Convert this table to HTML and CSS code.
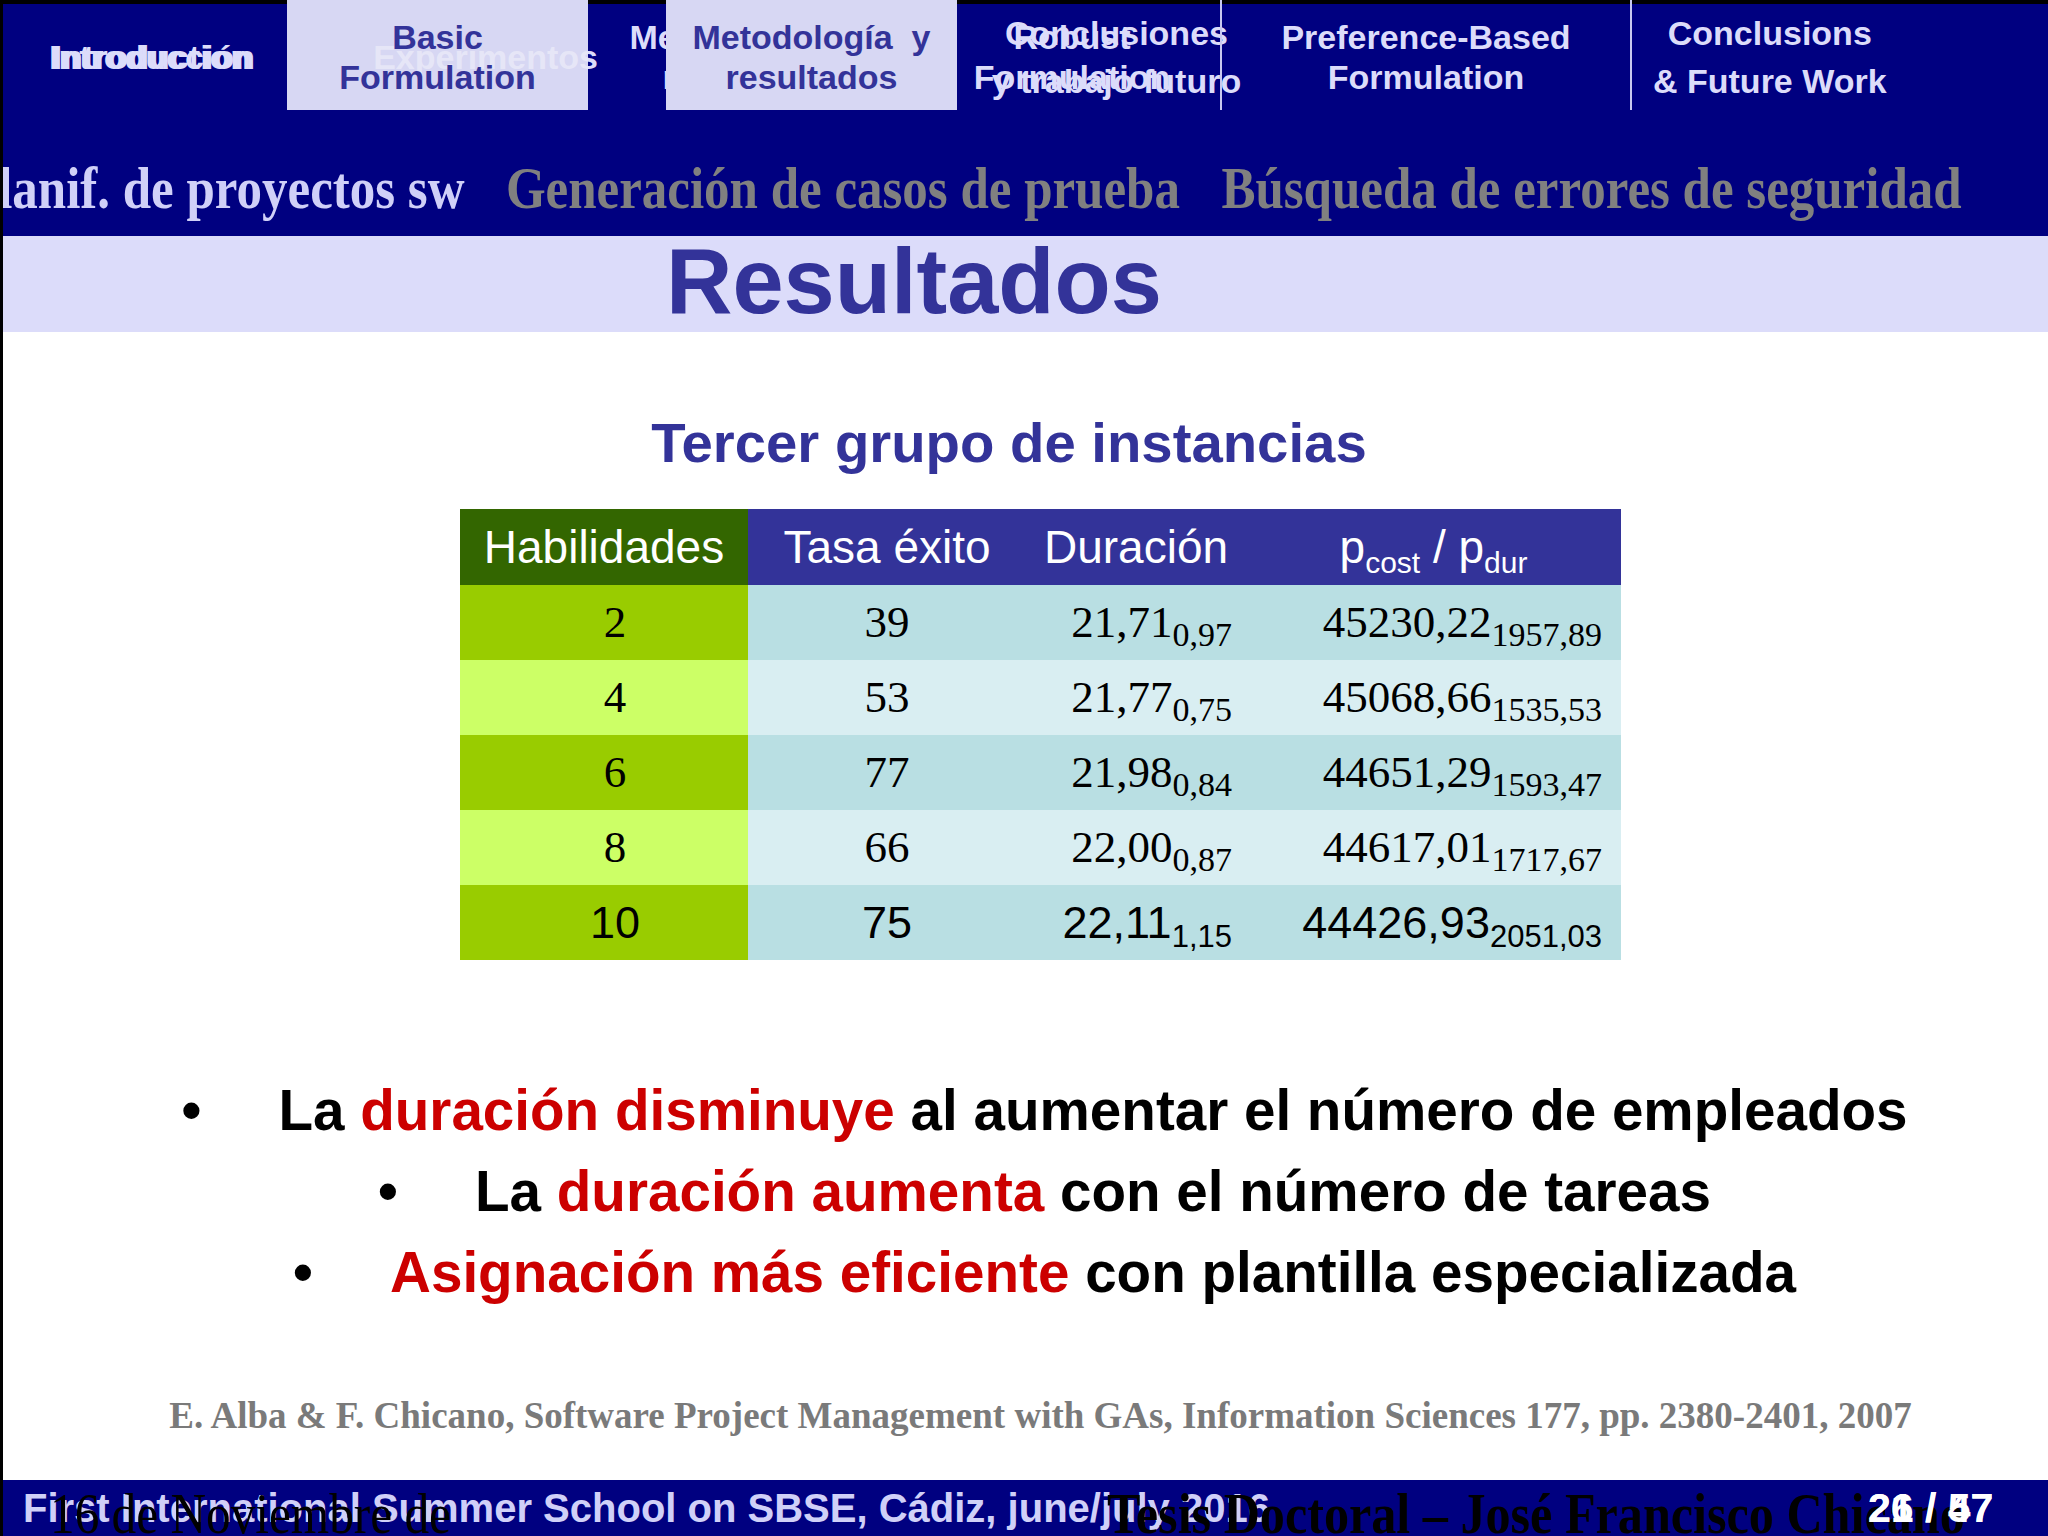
FILE: index.html
```html
<!DOCTYPE html>
<html lang="es">
<head>
<meta charset="utf-8">
<title>Resultados</title>
<link rel="stylesheet" href="styles.css">
</head>
<body>
<div class="slide">
  <header class="topbar">
    <nav class="tabs">
      <div class="tab tab-intro">
        <span class="lbl">Introducción</span>
        <span class="ghost ghost-intro">Introduction</span>
      </div>
      <div class="tab tab-basic">
        <span class="ghost ghost-exp">Experimentos</span>
        <div class="box">
          <span class="ghost ghost-exp faint">Experimentos</span>
          <span class="lbl">Basic<br>Formulation</span>
        </div>
      </div>
      <div class="tab tab-gap"></div>
      <div class="tab tab-met">
        <span class="ghost ghost-met">Metodología&nbsp; y<br>resultados</span>
        <div class="box"><span class="lbl">Metodología&nbsp; y<br>resultados</span></div>
      </div>
      <div class="tab tab-robust">
        <span class="lbl">Robust<br>Formulation</span>
        <span class="ghost ghost-conc">Conclusiones<br>y trabajo futuro</span>
      </div>
      <div class="tab tab-pref">
        <span class="lbl">Preference-Based<br>Formulation</span>
      </div>
      <div class="tab tab-concl">
        <span class="lbl">Conclusions<br>&amp; Future Work</span>
      </div>
    </nav>
    <div class="subnav">
      <span class="current">Planif. de proyectos sw</span>
      <span>Generación de casos de prueba</span>
      <span>Búsqueda de errores de seguridad</span>
    </div>
  </header>

  <div class="titlebar"><h1>Resultados</h1></div>

  <main class="content">
    <h2 class="heading">Tercer grupo de instancias</h2>

    <table class="grid">
      <colgroup><col class="c1"><col class="c2"><col class="c3"><col class="c4"></colgroup>
      <thead>
        <tr>
          <th class="h-green">Habilidades</th>
          <th>Tasa éxito</th>
          <th>Duración</th>
          <th>p<span class="hsub">cost</span> / p<span class="hsub">dur</span></th>
        </tr>
      </thead>
      <tbody>
        <tr><td class="k">2</td><td>39</td><td class="n">21,71<span class="sub">0,97</span></td><td class="n n4">45230,22<span class="sub">1957,89</span></td></tr>
        <tr class="alt"><td class="k">4</td><td>53</td><td class="n">21,77<span class="sub">0,75</span></td><td class="n n4">45068,66<span class="sub">1535,53</span></td></tr>
        <tr><td class="k">6</td><td>77</td><td class="n">21,98<span class="sub">0,84</span></td><td class="n n4">44651,29<span class="sub">1593,47</span></td></tr>
        <tr class="alt"><td class="k">8</td><td>66</td><td class="n">22,00<span class="sub">0,87</span></td><td class="n n4">44617,01<span class="sub">1717,67</span></td></tr>
        <tr class="sans"><td class="k">10</td><td>75</td><td class="n">22,11<span class="sub">1,15</span></td><td class="n n4">44426,93<span class="sub">2051,03</span></td></tr>
      </tbody>
    </table>

    <ul class="points">
      <li><span class="dot">•</span><span>La <em>duración disminuye</em> al aumentar el número de empleados</span></li>
      <li><span class="dot">•</span><span>La <em>duración aumenta</em> con el número de tareas</span></li>
      <li><span class="dot">•</span><span><em>Asignación más eficiente</em> con plantilla especializada</span></li>
    </ul>

    <p class="cite">E. Alba &amp; F. Chicano, Software Project Management with GAs, Information Sciences 177, pp. 2380-2401, 2007</p>
  </main>

  <footer class="footer">
    <span class="event">First International Summer School on SBSE, Cádiz, june/july 2016</span>
    <span class="fghost f-date">16 de Noviembre de</span>
    <span class="fghost f-thesis">Tesis Doctoral – José Francisco Chicano</span>
    <span class="pnum">21 / 57</span>
    <span class="pnum">26 / 47</span>
  </footer>
</div>
</body>
</html>
```

FILE: styles.css
```css
* { box-sizing: border-box; margin: 0; padding: 0; }
html, body { width: 2048px; height: 1536px; overflow: hidden; background: #fff; }
body { font-family: "Liberation Sans", Arial, sans-serif; }

.slide {
  width: 2048px;
  height: 1536px;
  display: flex;
  flex-direction: column;
  border-left: 3px solid #000;
  overflow: hidden;
}

/* ---------- top navigation ---------- */
.topbar {
  flex: none;
  height: 236px;
  background: linear-gradient(#000 0 4px, #000080 4px);
}
.tabs {
  display: grid;
  grid-template-columns: 284px 301px 78px 291px 263px 410px 418px;
  height: 110px;
}
.tab {
  position: relative;
  display: flex;
  align-items: center;
  justify-content: center;
  text-align: center;
  font-weight: 700;
  font-size: 34px;
  line-height: 40px;
  color: #dcdcfa;
  white-space: nowrap;
}
.lbl { position: relative; padding-top: 3px; }
.tab-intro { padding-left: 14px; }
.ghost {
  position: absolute;
  top: 0;
  bottom: 0;
  padding-top: 3px;
  display: flex;
  align-items: center;
  justify-content: center;
}
.ghost-intro { left: 14px; right: 0; }
.box {
  position: relative;
  z-index: 1;
  width: 100%;
  height: 100%;
  display: flex;
  align-items: center;
  justify-content: center;
  overflow: hidden;
  background: #d7d7f3;
  color: #333399;
}
.ghost-exp { right: -10px; justify-content: flex-end; z-index: 0; }
.box .faint { color: rgba(255, 255, 255, 0.4); }
.ghost-met { left: -63px; right: 63px; z-index: 0; }
.tab-robust { padding-right: 33px; }
.ghost-conc { left: 28px; right: -28px; line-height: 48px; }
.tab-pref { border-left: 2px solid #c8c8f0; }
.tab-concl {
  border-left: 2px solid #c8c8f0;
  justify-content: flex-start;
  padding-left: 21px;
  line-height: 48px;
}

.subnav {
  display: flex;
  gap: 48px;
  height: 126px;
  padding-top: 49px;
  margin-left: -36px;
  white-space: nowrap;
  font-family: "Liberation Serif", "Times New Roman", serif;
  font-weight: 700;
  font-size: 59px;
  line-height: 59px;
  color: #808080;
  transform: scaleX(0.864);
  transform-origin: 0 0;
}
.subnav .current { color: #d0d0f8; }

/* ---------- title ---------- */
.titlebar {
  flex: none;
  height: 96px;
  background: #dcdcfa;
}
.titlebar h1 {
  margin-left: 663px;
  font-size: 92px;
  line-height: 90px;
  font-weight: 700;
  color: #333399;
}

/* ---------- content ---------- */
.content {
  flex: 1;
  display: flex;
  flex-direction: column;
  align-items: flex-start;
}
.heading {
  align-self: center;
  margin-top: 79px;
  padding-right: 33px;
  font-size: 56.3px;
  line-height: 64px;
  font-weight: 700;
  color: #333399;
}

.grid {
  margin-top: 34px;
  margin-left: 457px;
  width: 1161px;
  table-layout: fixed;
  border-collapse: collapse;
  border-spacing: 0;
}
.c1 { width: 288px; }
.c2 { width: 278px; }
.c3 { width: 220px; }
.c4 { width: 375px; }
.grid th {
  height: 76px;
  padding: 0;
  background: #333399;
  color: #fff;
  font-weight: 400;
  font-size: 46px;
  line-height: 46px;
  text-align: center;
  white-space: nowrap;
}
.grid th.h-green { background: #336600; }
.hsub { font-size: 30px; line-height: 0; vertical-align: -10px; }
.grid td {
  height: 75px;
  padding: 0;
  font-family: "Liberation Serif", "Times New Roman", serif;
  font-size: 45px;
  line-height: 45px;
  color: #000;
  text-align: center;
  white-space: nowrap;
  background: #b9dfe3;
}
.grid tr.alt td { background: #d9eef2; }
.grid td.k { background: #99cc00; padding-left: 22px; }
.grid tr.alt td.k { background: #ccff66; }
.grid td.n { text-align: right; padding-right: 14px; }
.grid td.n4 { padding-right: 19px; }
.sub { font-size: 34px; line-height: 0; vertical-align: -9px; }
.grid tr.sans td { font-family: "Liberation Sans", Arial, sans-serif; font-size: 45px; }
.grid tr.sans .sub { font-size: 31px; }

.points {
  list-style: none;
  align-self: stretch;
  display: flex;
  flex-direction: column;
  align-items: center;
  margin-top: 110px;
  padding-left: 38px;
}
.points li {
  display: flex;
  align-items: center;
  height: 81px;
  font-size: 56.6px;
  font-weight: 700;
  color: #000;
  white-space: nowrap;
}
.points em { font-style: normal; color: #cc0000; }
.dot { width: 97px; }

.cite {
  align-self: stretch;
  text-align: center;
  margin-top: 78px;
  padding-left: 30px;
  font-family: "Liberation Serif", "Times New Roman", serif;
  font-weight: 700;
  font-size: 37px;
  line-height: 50px;
  color: #7a7a7a;
  white-space: nowrap;
}

/* ---------- footer ---------- */
.footer {
  flex: none;
  position: relative;
  height: 56px;
  padding-left: 20px;
  background: #000080;
  font-size: 40px;
  font-weight: 700;
  line-height: 56px;
  color: #d0d0f8;
  white-space: nowrap;
}
.fghost {
  position: absolute;
  top: 6px;
  display: inline-block;
  font-family: "Liberation Serif", "Times New Roman", serif;
  font-size: 56px;
  line-height: 56px;
  color: #000;
  transform: scaleX(0.88);
  transform-origin: 0 0;
}
.f-date { left: 47px; font-weight: 400; }
.f-thesis { left: 1104px; font-weight: 700; font-size: 57px; }
.pnum {
  position: absolute;
  left: 1865px;
  top: 0;
  font-size: 41px;
  color: #fff;
}
```
